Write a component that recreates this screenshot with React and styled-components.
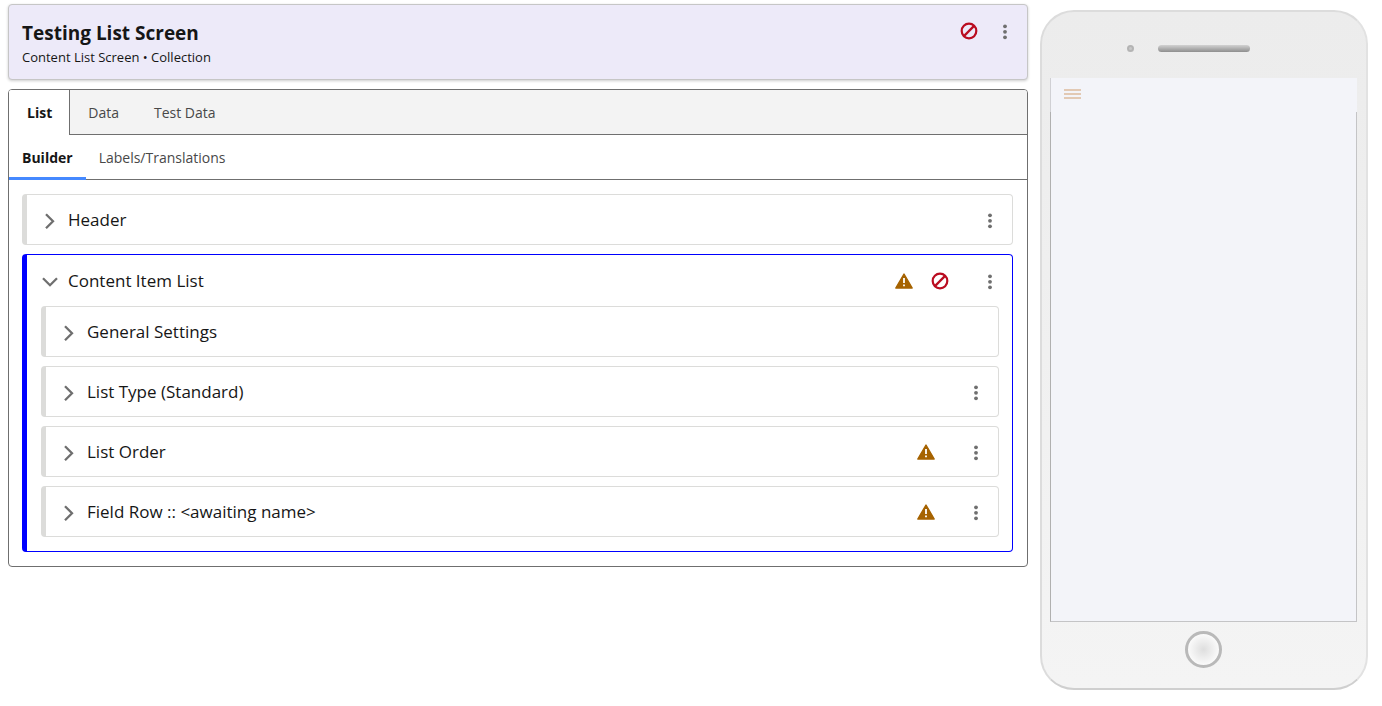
import React from 'react';
import styled, { createGlobalStyle, css } from 'styled-components';

const GlobalStyle = createGlobalStyle`
  * {
    box-sizing: border-box;
  }

  body {
    margin: 0;
    background: #fff;
    color: #161616;
    font-family: "Segoe UI", "Open Sans", "Noto Sans", sans-serif;
    font-size: 14px;
  }

  button {
    margin: 0;
    padding: 0;
    border: 0;
    background: none;
    color: inherit;
    font: inherit;
    cursor: pointer;
  }
`;

const Page = styled.div`
  display: grid;
  grid-template-columns: minmax(0, 1fr) 328px;
  align-items: start;
  gap: 12px;
  padding: 4px 14px 16px 8px;
`;

const Editor = styled.main`
  display: flex;
  flex-direction: column;
  gap: 9px;
`;

const ScreenHeader = styled.header`
  display: flex;
  justify-content: space-between;
  align-items: flex-start;
  padding: 14px 13px 12px;
  border: 1px solid #c6c6c6;
  border-radius: 4px;
  background: #edeaf9;
  box-shadow: 0 1px 3px rgba(0, 0, 0, .2);
`;

const ScreenTitle = styled.h1`
  margin: 0;
  font-size: 19px;
  font-weight: 700;
  line-height: 28px;
`;

const ScreenType = styled.p`
  margin: 0;
  font-size: 13px;
  line-height: 20px;
`;

const Actions = styled.div`
  display: flex;
  align-items: center;
  gap: ${props => props.$gap || 18}px;
`;

const Panel = styled.section`
  border: 1px solid #6f6f6f;
  border-radius: 4px;
  overflow: hidden;
`;

const TabBar = styled.div`
  display: flex;
  height: 45px;
  background: #f3f3f3;
  border-bottom: 1px solid #6f6f6f;
`;

const Tab = styled.button`
  && {
    height: 45px;
    padding: 0 17px 0 18px;
    color: #484848;

    ${props => props.$active && css`
      background: #fff;
      border-right: 1px solid #6f6f6f;
      color: #161616;
      font-weight: 700;
    `}
  }
`;

const SubTabBar = styled.div`
  display: flex;
  height: 45px;
  border-bottom: 1px solid #6f6f6f;
`;

const SubTab = styled.button`
  && {
    height: 45px;
    padding: 2px 13px 0;
    border-bottom: 3px solid transparent;
    color: #484848;

    ${props => props.$active && css`
      border-bottom-color: #4589ff;
      color: #161616;
      font-weight: 700;
    `}
  }
`;

const Cards = styled.div`
  display: flex;
  flex-direction: column;
  gap: 9px;
  padding: ${props => (props.$nested ? '0 13px 14px 14px' : '14px 14px 14px 13px')};
`;

const Card = styled.div`
  border: 1px solid ${props => (props.$active ? '#0000ff' : '#dcdcda')};
  border-left-width: 5px;
  border-radius: 4px;
`;

const CardRow = styled.div`
  display: flex;
  justify-content: space-between;
  align-items: center;
  height: ${props => (props.$open ? 51 : 49)}px;
  padding: 0 13px 0 14px;
`;

const Toggle = styled.button`
  && {
    display: flex;
    align-items: center;
    gap: 9px;
    font-size: 17px;
    line-height: 24px;
  }
`;

const IconButton = styled.button`
  && {
    display: flex;
    width: 18px;
    height: 24px;
    align-items: center;
    justify-content: center;
  }
`;

const Icon = styled.svg`
  display: block;
  flex: none;
`;

const Phone = styled.aside`
  display: flex;
  flex-direction: column;
  align-items: center;
  margin-top: 6px;
  padding: 0 9px 0 8px;
  border: 2px solid;
  border-color: #dcdcdc #e2e2e2 #cfcfcf #dcdcdc;
  border-radius: 34px;
  background: linear-gradient(#ececec, #f4f4f4);
`;

const PhoneTop = styled.div`
  display: grid;
  grid-template-columns: 1fr 92px 1fr;
  align-items: center;
  width: 100%;
  height: 66px;
  padding-bottom: 7px;
  padding-top: 14px;
`;

const Camera = styled.span`
  justify-self: end;
  width: 7px;
  height: 7px;
  margin-right: 24px;
  border: 2px solid #b4b4b4;
  border-radius: 50%;
  background: #c8c8c8;
`;

const Speaker = styled.span`
  height: 7px;
  border-radius: 4px;
  background: linear-gradient(#d2d2d2, #8e8e8e);
`;

const Screen = styled.div`
  display: flex;
  flex-direction: column;
  width: 100%;
  height: 544px;
  background: #f3f4f9;
`;

const ScreenBar = styled.div`
  height: 34px;
  padding: 4px 12px;
  border-left: 1px solid #d0d0d4;
`;

const ScreenBody = styled.div`
  flex: 1;
  border: 1px solid #c4c4c6;
  border-top: 0;
  border-left-color: #b0b0b0;
`;

const HomeButton = styled.button`
  && {
    width: 37px;
    height: 37px;
    margin: 9px 0 20px;
    border: 3px solid #b9b9b9;
    border-radius: 50%;
    background: radial-gradient(#dedede, #fafafa 70%);
  }
`;

const ChevronIcon = ({ open }) => (
  <Icon width="18" height="18" viewBox="0 0 18 18" fill="none" stroke="#6f6f6f" strokeWidth="2.3">
    <path d={open ? 'M2 6.2l7 7 7-7' : 'M5 3.2l7 7-7 7'} />
  </Icon>
);

const WarningIcon = () => (
  <Icon width="18" height="18" viewBox="0 0 18 18" role="img" aria-label="Warning">
    <path d="M9 2 17.2 16H.8z" fill="#a66300" stroke="#a66300" strokeWidth="1.4" strokeLinejoin="round" />
    <path d="M9 6v5M9 12.4v1.8" stroke="#fff" strokeWidth="1.8" />
  </Icon>
);

const BanIcon = () => (
  <Icon width="18" height="18" viewBox="0 0 18 18" fill="none" stroke="#ba0c20" strokeWidth="2.2" role="img" aria-label="Error">
    <circle cx="9" cy="9" r="7.3" />
    <path d="M3.9 14.1 14.1 3.9" />
  </Icon>
);

const Menu = () => (
  <IconButton type="button" aria-label="More actions">
    <Icon width="6" height="18" viewBox="0 0 6 18" fill="#6f6f6f">
      <circle cx="3" cy="4.3" r="1.9" />
      <circle cx="3" cy="9.8" r="1.9" />
      <circle cx="3" cy="15.3" r="1.9" />
    </Icon>
  </IconButton>
);

const Section = ({ title, warning, error, menu, open, children }) => (
  <Card $active={open}>
    <CardRow $open={open}>
      <Toggle type="button" aria-expanded={!!open}>
        <ChevronIcon open={open} />
        {title}
      </Toggle>
      <Actions $gap={32}>
        <Actions>
          {warning && <WarningIcon />}
          {error && <BanIcon />}
        </Actions>
        {menu && <Menu />}
      </Actions>
    </CardRow>
    {children}
  </Card>
);

export default class App extends React.Component {
  render() {
    return (
      <Page>
        <GlobalStyle />

        <Editor>
          <ScreenHeader>
            <div>
              <ScreenTitle>Testing List Screen</ScreenTitle>
              <ScreenType>Content List Screen • Collection</ScreenType>
            </div>
            <Actions>
              <BanIcon />
              <Menu />
            </Actions>
          </ScreenHeader>

          <Panel>
            <TabBar role="tablist">
              <Tab type="button" role="tab" aria-selected="true" $active>List</Tab>
              <Tab type="button" role="tab">Data</Tab>
              <Tab type="button" role="tab">Test Data</Tab>
            </TabBar>
            <SubTabBar role="tablist">
              <SubTab type="button" role="tab" aria-selected="true" $active>Builder</SubTab>
              <SubTab type="button" role="tab">Labels/Translations</SubTab>
            </SubTabBar>

            <Cards>
              <Section title="Header" menu />
              <Section title="Content Item List" warning error menu open>
                <Cards $nested>
                  <Section title="General Settings" />
                  <Section title="List Type (Standard)" menu />
                  <Section title="List Order" warning menu />
                  <Section title="Field Row :: <awaiting name>" warning menu />
                </Cards>
              </Section>
            </Cards>
          </Panel>
        </Editor>

        <Phone>
          <PhoneTop>
            <Camera />
            <Speaker />
          </PhoneTop>
          <Screen>
            <ScreenBar>
              <IconButton type="button" aria-label="Menu">
                <Icon width="18" height="12" viewBox="0 0 18 12" stroke="#e2c9b4" strokeWidth="2">
                  <path d="M1 2h17M1 6h17M1 10h17" />
                </Icon>
              </IconButton>
            </ScreenBar>
            <ScreenBody />
          </Screen>
          <HomeButton type="button" aria-label="Home" />
        </Phone>
      </Page>
    );
  }
}
